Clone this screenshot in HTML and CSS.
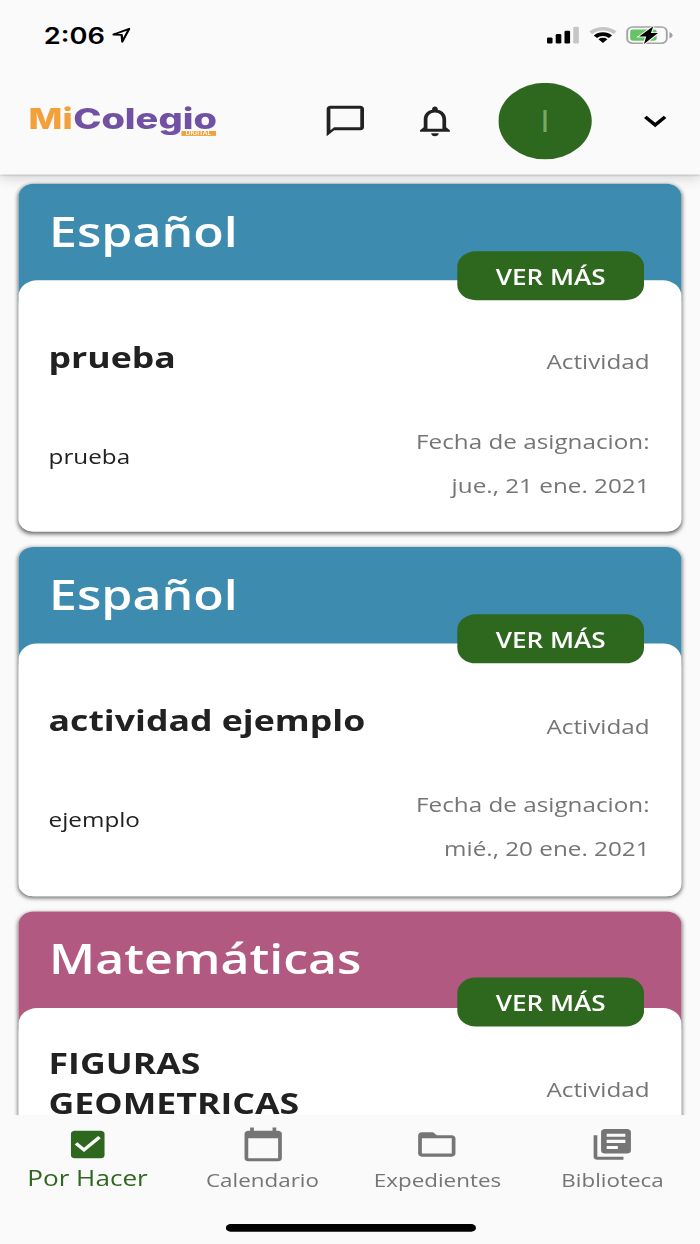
FILE: index.html
```
<!DOCTYPE html>
<html lang="es">
<head>
    <meta charset="UTF-8">
    <meta name="viewport" content="width=device-width, initial-scale=1.0">
    <title>MiColegio Digital</title>
    <link rel="stylesheet" href="styles.css">
</head>
<body>

    <div class="screen">

        <!-- Barra de estado -->
        <div class="status-bar">
            <div class="status-left">
                <span class="status-time">2:06</span>
                <svg class="location-icon" viewBox="0 0 10 10">
                    <path d="M.8 4.5 9.2.8 5.5 9.2 5.2 4.8Z" fill="none" stroke="#000" stroke-width="1.2" stroke-linejoin="round"/>
                </svg>
            </div>
            <svg class="status-icons" viewBox="0 0 68 12">
                <rect x="0" y="7.4" width="3" height="4" rx=".8"/>
                <rect x="4.7" y="5.2" width="3" height="6.2" rx=".8"/>
                <rect x="9.4" y="3" width="3" height="8.4" rx=".8"/>
                <rect x="14.1" y=".5" width="3" height="10.9" rx=".8" fill="#c6c6c6"/>
                <path d="M22.7 3.6a10.3 10.3 0 0 1 14.6 0l-1.6 1.7a8.1 8.1 0 0 0-11.4 0z" fill="#c6c6c6"/>
                <path d="M25.1 6.1a6.9 6.9 0 0 1 9.8 0l-1.7 1.7a4.6 4.6 0 0 0-6.4 0z"/>
                <path d="M27.6 8.6a3.5 3.5 0 0 1 4.8 0L30 11.1z"/>
                <rect x="43" y=".6" width="21.2" height="10.6" rx="2.9" fill="none" stroke="#a3a3a3"/>
                <rect x="44.6" y="2.2" width="14.2" height="7.4" rx="1.6" fill="#65c466"/>
                <path d="M65.6 4.1c1.2.4 1.7 1 1.7 1.9s-.5 1.5-1.7 1.9z" fill="#a3a3a3"/>
                <path d="M57 .2 49.4 6.9h3.8L52 11.7l7.5-7.1h-3.800z" stroke="#fafafa" stroke-width="1.2" paint-order="stroke"/>
            </svg>
        </div>

        <!-- Encabezado -->
        <header class="header">
            <svg class="logo" viewBox="0 0 100 30">
                <text class="logo-mi" x="-.7" y="20" textLength="23.6" lengthAdjust="spacingAndGlyphs">Mi</text>
                <text class="logo-colegio" x="23.2" y="20" textLength="77" lengthAdjust="spacingAndGlyphs">Colegio</text>
                <rect x="81.2" y="21.5" width="18.5" height="3.2" fill="#f1a03a"/>
                <text class="logo-digital" x="83.5" y="24.400" textLength="13.6" lengthAdjust="spacingAndGlyphs">DIGITAL</text>
            </svg>
            <div class="header-actions">
                <svg class="icon" viewBox="0 0 24 24"><path d="M20 2H4c-1.100 0-2 .9-2 2v18l4-4h14c1.100 0 2-.9 2-2V4c0-1.100-.9-2-2-2zm0 14H6l-2 2V4h16v12z"/></svg>
                <svg class="icon icon-bell" viewBox="0 0 24 24"><path d="M12 22c1.100 0 2-.9 2-2h-4c0 1.100.9 2 2 2zm6-6v-5c0-3.070-1.630-5.640-4.500-6.320V4c0-.83-.67-1.500-1.500-1.500s-1.500.67-1.500 1.500v.68C7.640 5.360 6 7.920 6 11v5l-2 2v1h16v-1l-2-2zm-2 1H8v-6c0-2.480 1.510-4.500 4-4.500s4 2.020 4 4.500v6z"/></svg>
                <div class="avatar">I</div>
                <svg class="icon icon-more" viewBox="0 0 24 24"><path d="M16.590 8.590 12 13.170 7.410 8.590 6 10l6 6 6-6z"/></svg>
            </div>
        </header>

        <!-- Lista de actividades -->
        <main class="list">
            <article class="card">
                <div class="card-header espanol">
                    <h2 class="card-subject">Español</h2>
                    <button class="card-button">VER MÁS</button>
                </div>
                <div class="card-body">
                    <div class="card-row">
                        <h3 class="card-title">prueba</h3>
                        <span class="card-type">Actividad</span>
                    </div>
                    <div class="card-info">
                        <p class="card-text">prueba</p>
                        <p class="card-date">Fecha de asignacion:<br>jue., 21 ene. 2021</p>
                    </div>
                </div>
            </article>

            <article class="card">
                <div class="card-header espanol">
                    <h2 class="card-subject">Español</h2>
                    <button class="card-button">VER MÁS</button>
                </div>
                <div class="card-body">
                    <div class="card-row">
                        <h3 class="card-title">actividad ejemplo</h3>
                        <span class="card-type">Actividad</span>
                    </div>
                    <div class="card-info">
                        <p class="card-text">ejemplo</p>
                        <p class="card-date">Fecha de asignacion:<br>mié., 20 ene. 2021</p>
                    </div>
                </div>
            </article>

            <article class="card">
                <div class="card-header matematicas">
                    <h2 class="card-subject">Matemáticas</h2>
                    <button class="card-button">VER MÁS</button>
                </div>
                <div class="card-body">
                    <div class="card-row">
                        <h3 class="card-title">FIGURAS<br>GEOMETRICAS</h3>
                        <span class="card-type">Actividad</span>
                    </div>
                </div>
            </article>
        </main>

        <!-- Navegación inferior -->
        <nav class="bottom-nav">
            <div class="nav-items">
                <a class="nav-item active">
                    <svg class="icon" viewBox="0 0 24 24"><path d="M19 3H5c-1.110 0-2 .9-2 2v14c0 1.100.89 2 2 2h14c1.110 0 2-.9 2-2V5c0-1.100-.89-2-2-2zm-9 14l-5-5 1.410-1.410L10 14.170l7.590-7.590L19 8l-9 9z"/></svg>
                    <span>Por Hacer</span>
                </a>
                <a class="nav-item">
                    <svg class="icon" viewBox="0 0 24 24"><path d="M20 3h-1V1h-2v2H7V1H5v2H4c-1.100 0-2 .9-2 2v16c0 1.100.9 2 2 2h16c1.100 0 2-.9 2-2V5c0-1.100-.9-2-2-2zm0 18H4V8h16v13z"/></svg>
                    <span>Calendario</span>
                </a>
                <a class="nav-item">
                    <svg class="icon" viewBox="0 0 24 24"><path d="M20 6h-8l-2-2H4c-1.100 0-1.990.9-1.990 2L2 18c0 1.100.9 2 2 2h16c1.100 0 2-.9 2-2V8c0-1.100-.9-2-2-2zm0 12H4V8h16v10z"/></svg>
                    <span>Expedientes</span>
                </a>
                <a class="nav-item">
                    <svg class="icon" viewBox="0 0 24 24"><path d="M4 6H2v14c0 1.100.9 2 2 2h14v-2H4V6zm16-4H8c-1.100 0-2 .9-2 2v12c0 1.100.9 2 2 2h12c1.100 0 2-.9 2-2V4c0-1.100-.9-2-2-2zm-1 9H9V9h10v2zm-4 4H9v-2h6v2zm4-8H9V5h10v2z"/></svg>
                    <span>Biblioteca</span>
                </a>
            </div>
            <div class="home-indicator"></div>
        </nav>

    </div>

</body>
</html>
```
FILE: styles.css
```
* {
    box-sizing: border-box;
}

body {
    margin: 0;
    width: 100vw;
    height: 100vh;
    overflow: hidden;
    background-color: #fafafa;
    font-family: 'Open Sans', 'Noto Sans', sans-serif;
    color: #212121;
}

h2, h3, p {
    margin: 0;
}

/* Pantalla de 375x812 estirada a toda la ventana */
.screen {
    width: 375px;
    height: 812px;
    display: flex;
    flex-direction: column;
    overflow: hidden;
    transform: scale(1.86667, 1.53202);
    transform-origin: 0 0;
}

.icon {
    width: 24px;
    height: 24px;
    flex: none;
    fill: currentColor;
}

/* Barra de estado */
.status-bar {
    height: 44px;
    flex: none;
    display: flex;
    justify-content: space-between;
    align-items: center;
    padding: 2px 14px 0 23.5px;
    background-color: #fafafa;
    position: relative;
    z-index: 3;
}

.status-left {
    display: flex;
    align-items: center;
    gap: 3.5px;
}

.status-time {
    padding-top: 1px;
    font-family: Inter, sans-serif;
    font-size: 14.6px;
    font-weight: 600;
    line-height: 18px;
    color: #000;
}

.location-icon {
    width: 10px;
    height: 10px;
}

.status-icons {
    width: 68px;
    height: 12px;
}

/* Encabezado */
.header {
    height: 70px;
    flex: none;
    display: flex;
    justify-content: space-between;
    align-items: center;
    padding: 0 12px 0 16.3px;
    background-color: #fafafa;
    box-shadow: 0 1px 1px rgba(0, 0, 0, 0.18), 0 2px 7px rgba(0, 0, 0, 0.16);
    position: relative;
    z-index: 2;
}

.logo {
    width: 100px;
    height: 30px;
    font-family: Inter, 'Open Sans', sans-serif;
    font-weight: 800;
}

.logo-mi {
    font-size: 18.5px;
    fill: #f1a03a;
}

.logo-colegio {
    font-size: 18.5px;
    fill: #7151a4;
}

.logo-digital {
    font-size: 3.6px;
    font-weight: 600;
    fill: #fff;
}

.header-actions {
    display: flex;
    align-items: center;
}

.icon-bell {
    margin: 0 22px 0 24px;
}

.icon-more {
    margin-left: 22px;
    color: #000;
}

.avatar {
    width: 50px;
    height: 50px;
    border-radius: 50%;
    background-color: #2e671e;
    color: #76a868;
    font-size: 20px;
    line-height: 50px;
    text-align: center;
}

/* Tarjetas */
.list {
    flex: 1;
    min-height: 0;
    overflow: hidden;
    display: flex;
    flex-direction: column;
    gap: 10px;
    padding: 6px 10px 0;
}

.card {
    height: 227.3px;
    flex: none;
    border-radius: 8px;
    background-color: #fff;
    box-shadow: 0 1px 2.5px rgba(0, 0, 0, 0.6);
}

.card-header {
    height: 77px;
    display: flex;
    justify-content: space-between;
    padding: 0 20px 0 16.3px;
    border-radius: 8px 8px 0 0;
}

.espanol {
    background-color: #3d8bae;
}

.matematicas {
    background-color: #b15980;
}

.card-subject {
    font-size: 26.8px;
    font-weight: 600;
    line-height: 61px;
    color: #fff;
}

.card-button {
    width: 100px;
    height: 32px;
    margin-top: 43.6px;
    padding: 1px 0 0;
    border: none;
    border-radius: 10px;
    background-color: #2e671e;
    color: #fff;
    font-family: inherit;
    font-size: 14px;
    font-weight: 600;
    line-height: 31px;
    position: relative;
    z-index: 1;
}

.card-body {
    height: 164.3px;
    margin-top: -14px;
    padding: 8px 17px 0 16px;
    border-radius: 10px 10px 8px 8px;
    background-color: #fff;
}

.card-row {
    height: 83px;
    display: flex;
    justify-content: space-between;
    align-items: center;
}

.card-title {
    font-size: 19.1px;
    font-weight: 700;
    line-height: 26px;
}

.card-type {
    padding-top: 7.6px;
    font-size: 13px;
    line-height: 20px;
    color: #757575;
}

.card-info {
    height: 58px;
    display: flex;
    justify-content: space-between;
    align-items: center;
}

.card-text {
    padding-bottom: 10px;
    font-size: 13px;
    line-height: 20px;
}

.card-date {
    font-size: 13px;
    line-height: 29px;
    text-align: right;
    color: #757575;
}

/* Navegación inferior */
.bottom-nav {
    height: 84.2px;
    flex: none;
    display: flex;
    flex-direction: column;
    justify-content: space-between;
    align-items: center;
    padding: 7px 0 8px;
    background-color: #fafafa;
    position: relative;
    z-index: 2;
}

.nav-items {
    width: 100%;
    display: flex;
}

.nav-item {
    flex: 1;
    display: flex;
    flex-direction: column;
    align-items: center;
    color: #757575;
    font-size: 12px;
    line-height: 23px;
}

.nav-item.active {
    color: #2e671e;
    font-size: 14px;
    line-height: 20px;
}

.home-indicator {
    width: 134px;
    height: 5px;
    border-radius: 3px;
    background-color: #000;
}
```
